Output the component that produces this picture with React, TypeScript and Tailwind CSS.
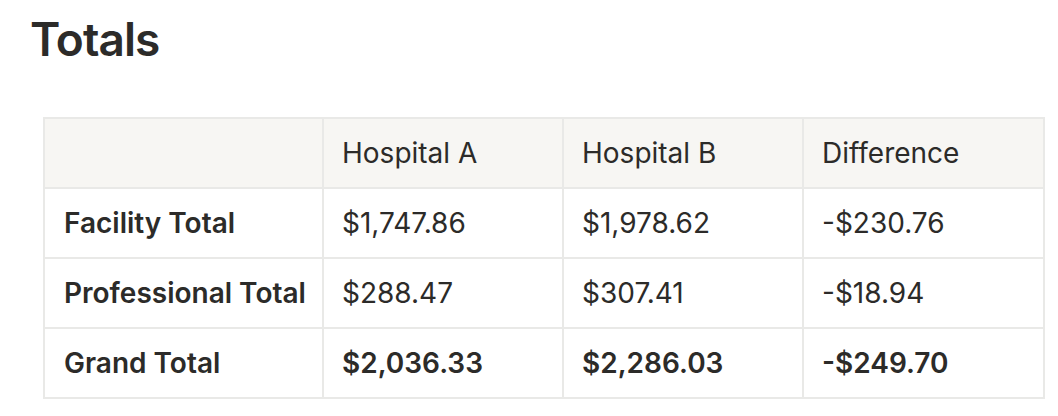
import React from 'react';

const rows = [
  { label: 'Facility Total', a: '$1,747.86', b: '$1,978.62', diff: '-$230.76', bold: false },
  { label: 'Professional Total', a: '$288.47', b: '$307.41', diff: '-$18.94', bold: false },
  { label: 'Grand Total', a: '$2,036.33', b: '$2,286.03', diff: '-$249.70', bold: true },
];

const App = () => {
  return (
    <div className="w-[1058px] h-[416px] bg-white pl-[30px] pt-[16px] font-['Inter','Liberation_Sans',sans-serif] text-[#2c2b29]">
      <h2 className="text-[46px] leading-none font-semibold tracking-[-0.02em]">Totals</h2>

      <table className="mt-[55px] ml-[13px] w-[1000px] table-fixed border-collapse text-[28px] leading-none">
        <colgroup>
          <col className="w-[279px]" />
          <col className="w-[240px]" />
          <col className="w-[240px]" />
          <col className="w-[241px]" />
        </colgroup>
        <thead>
          <tr className="h-[70px] bg-[#f7f6f3]">
            <th className="border-2 border-[#e9e9e7] pl-[19px] pr-[10px] text-left font-normal"></th>
            <th className="border-2 border-[#e9e9e7] pl-[18px] pr-[19px] text-left font-normal">Hospital A</th>
            <th className="border-2 border-[#e9e9e7] pl-[18px] pr-[19px] text-left font-normal">Hospital B</th>
            <th className="border-2 border-[#e9e9e7] pl-[18px] pr-[19px] text-left font-normal">Difference</th>
          </tr>
        </thead>
        <tbody>
          {rows.map((row, index) => (
            <tr key={index} className={`h-[70px] ${row.bold ? 'font-semibold' : ''}`}>
              <td className="border-2 border-[#e9e9e7] pl-[19px] pr-[10px] font-semibold whitespace-nowrap">{row.label}</td>
              <td className="border-2 border-[#e9e9e7] pl-[18px] pr-[19px]">{row.a}</td>
              <td className="border-2 border-[#e9e9e7] pl-[18px] pr-[19px]">{row.b}</td>
              <td className="border-2 border-[#e9e9e7] pl-[18px] pr-[19px]">{row.diff}</td>
            </tr>
          ))}
        </tbody>
      </table>
    </div>
  );
};

export default App;
